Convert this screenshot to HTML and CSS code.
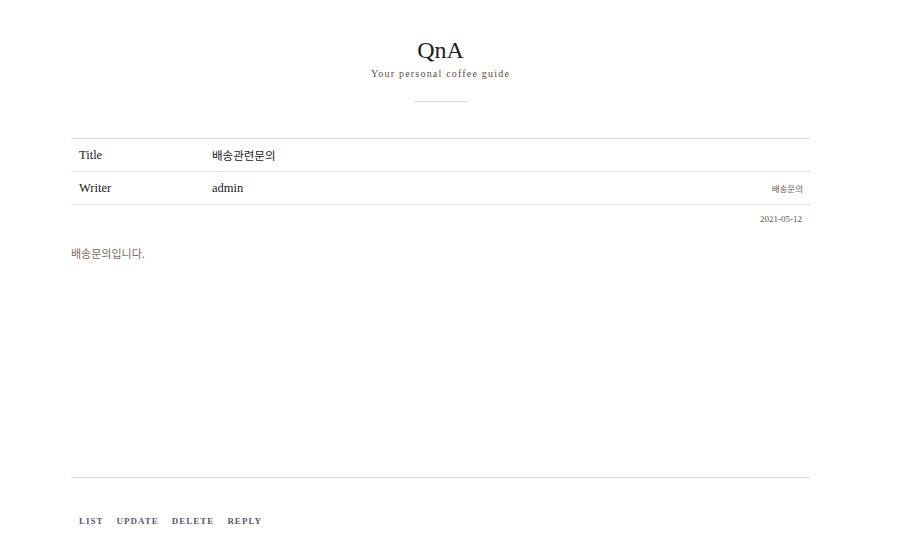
FILE: index.html
```html
<!DOCTYPE html>
<html lang="ko">
<head>
<meta charset="utf-8">
<title>QnA</title>
<link rel="stylesheet" href="styles.css">
</head>
<body>
<div class="page">
  <header class="head">
    <h1 class="title">QnA</h1>
    <p class="subtitle">Your personal coffee guide</p>
    <div class="rule"></div>
  </header>
  <section class="board">
    <div class="row">
      <div class="label">Title</div>
      <div class="value ko">배송관련문의</div>
    </div>
    <div class="row">
      <div class="label">Writer</div>
      <div class="value">admin</div>
      <div class="cat">배송문의</div>
    </div>
    <div class="date">2021-05-12</div>
    <div class="content">배송문의입니다.</div>
    <div class="actions">
      <a class="btn">LIST</a>
      <a class="btn">UPDATE</a>
      <a class="btn">DELETE</a>
      <a class="btn">REPLY</a>
    </div>
  </section>
</div>
</body>
</html>
```
FILE: styles.css
```css
html, body {
  margin: 0;
  padding: 0;
  background: #fff;
}
body {
  font-family: "Liberation Serif", "Noto Sans CJK KR", serif;
  color: #222;
}
.page {
  width: 739px;
  margin-left: 71px;
}
.head {
  display: flex;
  flex-direction: column;
  align-items: center;
  padding-top: 36px;
}
.title {
  margin: 0;
  font-weight: normal;
  font-size: 24px;
  line-height: 28px;
  color: #1e1e1e;
}
.subtitle {
  margin: 4px 0 0;
  font-size: 10px;
  line-height: 12px;
  letter-spacing: 1.2px;
  color: #5e4c3a;
}
.rule {
  width: 54px;
  height: 1px;
  background: #ddd;
  margin-top: 21px;
}
.board {
  margin-top: 36px;
  border-top: 1px solid #ddd;
}
.row {
  display: flex;
  align-items: center;
  height: 32px;
  border-bottom: 1px solid #ddd;
  font-size: 12.5px;
  color: #1a1a1a;
}
.label {
  width: 141px;
  padding-left: 8px;
  box-sizing: border-box;
}
.value {
  flex: 1;
  font-size: 12.5px;
}
.value.ko {
  font-size: 11.5px;
}
.cat {
  font-family: "Noto Sans CJK KR", sans-serif;
  font-size: 8.5px;
  color: #6a5a4a;
  padding-right: 7px;
}
.date {
  text-align: right;
  padding-right: 8px;
  font-size: 9px;
  color: #555;
  margin-top: 9px;
}
.content {
  margin-top: 21px;
  font-family: "Noto Sans CJK KR", sans-serif;
  font-size: 11px;
  color: #7a6b5c;
  height: 232px;
  border-bottom: 1px solid #ddd;
}
.actions {
  display: flex;
  gap: 13px;
  padding: 38px 0 0 8px;
}
.btn {
  font-size: 9px;
  font-weight: bold;
  letter-spacing: 1px;
  color: #5a5870;
  text-decoration: none;
}
```
